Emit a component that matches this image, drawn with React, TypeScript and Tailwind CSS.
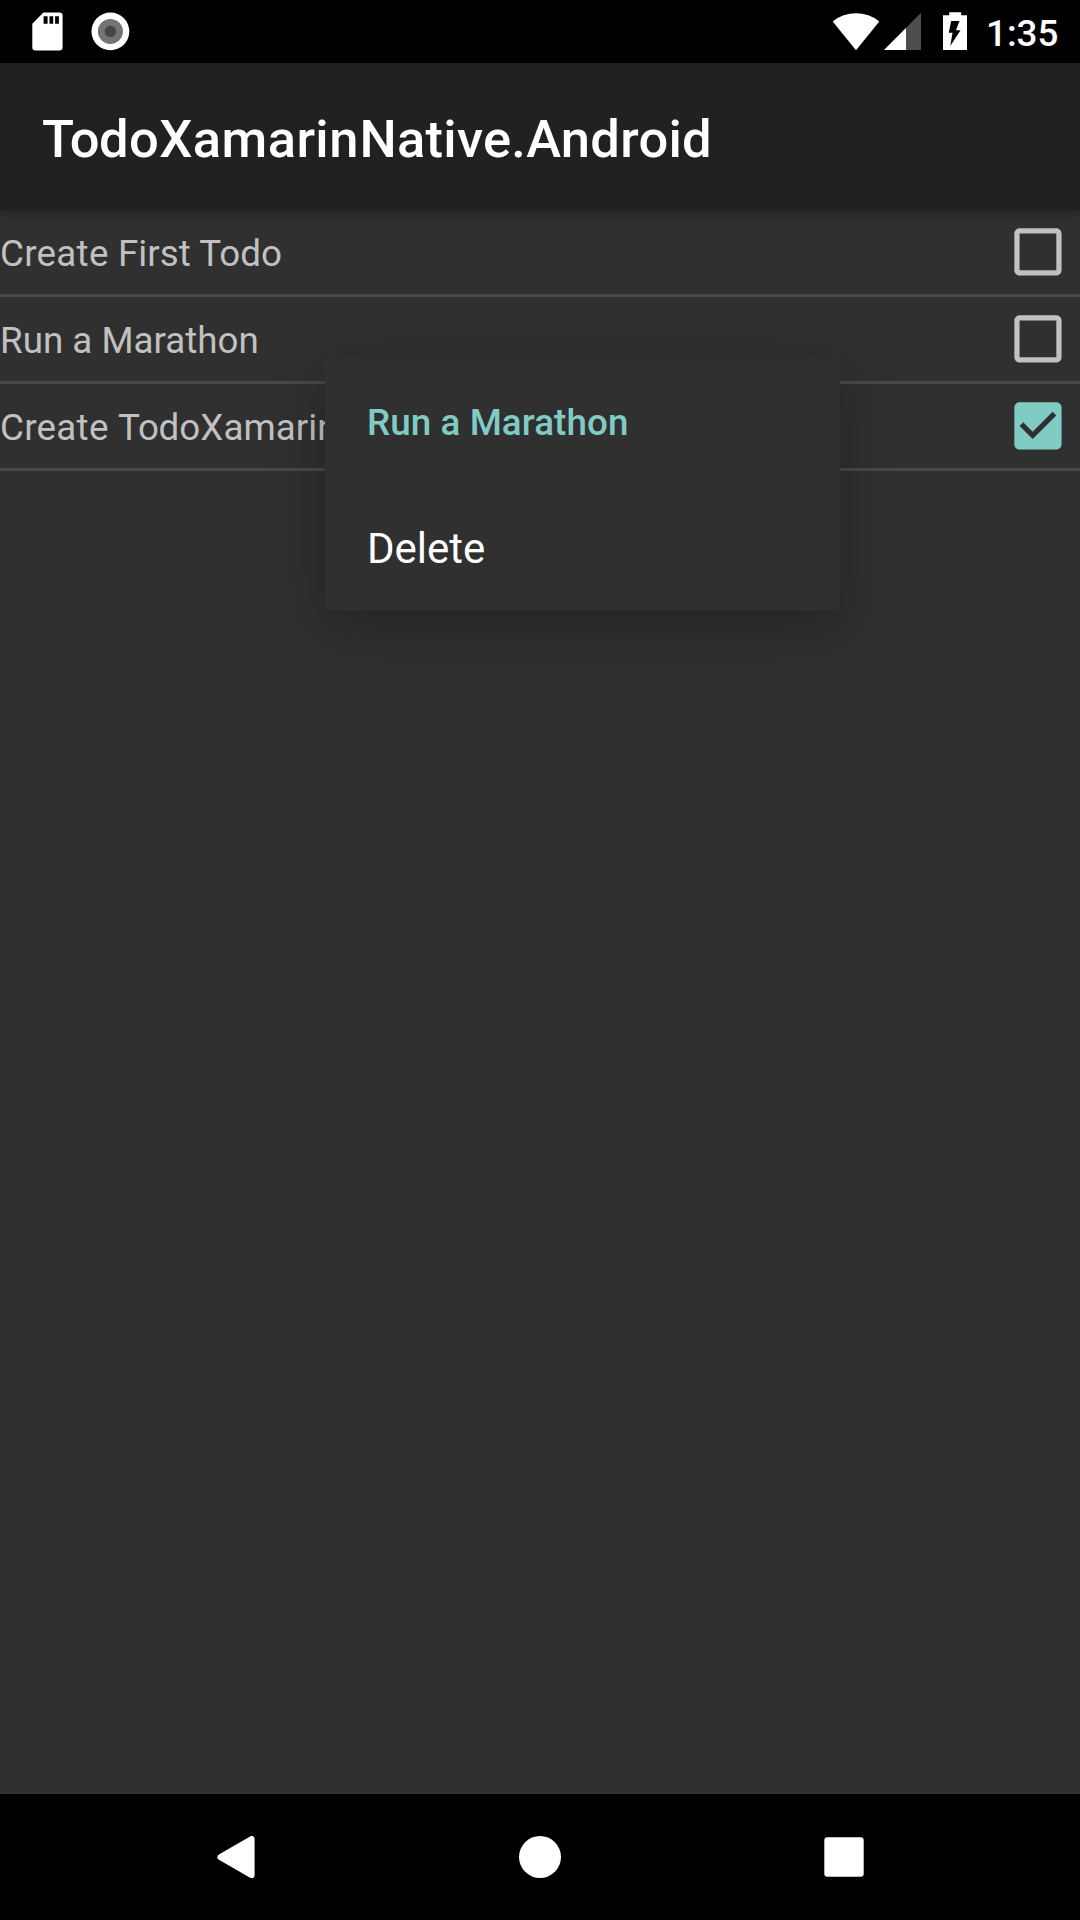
import type { ReactNode } from "react";

const todos: { id: number; title: ReactNode; done: boolean }[] = [
  {
    id: 1,
    title: (
      <>
        <span className="tracking-[0.27px]">Create </span>
        <span>First </span>
        <span>Todo</span>
      </>
    ),
    done: false,
  },
  { id: 2, title: "Run a Marathon", done: false },
  {
    id: 3,
    title: (
      <>
        <span className="tracking-[0.27px]">Create </span>
        <span className="tracking-[-0.3px]">To</span>
        <span className="tracking-[0.05px]">doXamarinNative</span>
      </>
    ),
    done: true,
  },
];

function StatusBar() {
  return (
    <header className="flex h-[63px] items-start bg-black">
      <svg className="ml-8 h-[63px] w-8" viewBox="32 0 32 63" aria-label="SD card">
        <path
          fill="#fff"
          fillRule="evenodd"
          d="M43.4 12.6h16a3.2 3.2 0 0 1 3.2 3.2v31.5a3.2 3.2 0 0 1-3.2 3.2H35.5a3.2 3.2 0 0 1-3.2-3.2V23.7zM43.6 16.2v7.6h4v-7.6zM49.5 16.2v7.6h3.7v-7.6zM55.1 16.2v7.6h3.8v-7.6z"
        />
      </svg>
      <svg className="ml-[26px] h-[63px] w-10" viewBox="90 0 40 63" aria-label="Recording">
        <circle cx="110.4" cy="31.4" r="18.9" fill="#fff" />
        <circle cx="110.4" cy="31.4" r="12.5" fill="#737373" />
        <circle cx="110.4" cy="31.4" r="5.7" fill="#454545" />
      </svg>
      <div className="ml-auto flex">
        <svg className="h-[63px] w-[140px]" viewBox="832 0 140 63" aria-label="Wi-Fi, signal and battery">
          <path fill="#fff" d="M856 50.3 832.7 21.4A37.5 37.5 0 0 1 879.3 21.4z" />
          <path fill="#4d4d4d" d="M921 12.8V50H884z" />
          <path fill="#fff" d="M906 28V50H884z" />
          <path
            fill="#fff"
            fillRule="evenodd"
            d="M949.2 12.2h12v3.1h5.8V50h-24V15.3h6.2zM951.2 21l-2.5 11.7h3.8L950.3 46l10.2-15.8h-4.6l3.6-9.2z"
          />
        </svg>
        <span className="mr-[21px] ml-[14px] w-[73px] text-[36.75px] leading-[67px] font-medium whitespace-nowrap">1:35</span>
      </div>
    </header>
  );
}

function Checkbox({ checked }: { checked: boolean }) {
  return (
    <svg className="mt-2.5 mr-[11px] size-[63px] shrink-0" viewBox="-0.17 -0.17 24 24">
      {checked ? (
        <path
          fill="#80cbc4"
          d="M19 3H5c-1.11 0-2 .9-2 2v14c0 1.1.89 2 2 2h14c1.11 0 2-.9 2-2V5c0-1.1-.9-2-2-2zm-9 14l-5-5 1.41-1.41L10 14.17l7.59-7.59L19 8l-9 9z"
        />
      ) : (
        <path
          fill="#c1c1c1"
          d="M19 5v14H5V5h14m0-2H5c-1.1 0-2 .9-2 2v14c0 1.1.9 2 2 2h14c1.1 0 2-.9 2-2V5c0-1.1-.9-2-2-2z"
        />
      )}
    </svg>
  );
}

function ContextMenu() {
  return (
    <div className="absolute top-[148px] left-[325px] h-[252px] w-[515px] rounded-[5px] bg-[#303030] px-[42px] shadow-[0_16px_56px_rgba(0,0,0,0.26)]">
      <div className="h-[126px] text-[36.75px] leading-[129px] font-medium tracking-[0.09px] text-[#80cbc4]">Run a Marathon</div>
      <div className="h-[126px] text-[42px] leading-[129px] text-white">Delete</div>
    </div>
  );
}

export default function App() {
  return (
    <div className="flex h-[1920px] w-[1080px] flex-col overflow-hidden bg-[#303030] font-['Roboto',sans-serif] text-white">
      <StatusBar />
      <div className="relative z-10 h-[147px] bg-[#212121] px-[42px] shadow-[0_3px_10px_rgba(0,0,0,0.32)]">
        <h1 className="text-[52.5px] leading-[152px] font-medium whitespace-nowrap">
          <span className="tracking-[-0.6px]">To</span>
          <span className="tracking-[0.42px]">doXamari</span>
          <span className="tracking-[1px]">n</span>
          <span className="tracking-[0.28px]">Native.Android</span>
        </h1>
      </div>
      <main className="relative flex-1">
        <ul>
          {todos.map((t) => (
            <li key={t.id} className="flex h-[87px] items-start justify-between border-b-[3px] border-[#494949]">
              <span className="h-[84px] text-[36.75px] leading-[87px] whitespace-pre text-[#c1c1c1]">{t.title}</span>
              <Checkbox checked={t.done} />
            </li>
          ))}
        </ul>
        <ContextMenu />
      </main>
      <nav className="h-[126px] bg-black">
        <svg className="block h-[126px] w-full" viewBox="0 1794 1080 126">
          <path
            fill="#fff"
            stroke="#fff"
            strokeWidth="6"
            strokeLinejoin="round"
            d="M220.4 1857.2 251.6 1839v36.2z"
          />
          <circle cx="540" cy="1857" r="21" fill="#fff" />
          <rect x="824.3" y="1837.3" width="39.4" height="39.4" rx="3" fill="#fff" />
        </svg>
      </nav>
    </div>
  );
}
